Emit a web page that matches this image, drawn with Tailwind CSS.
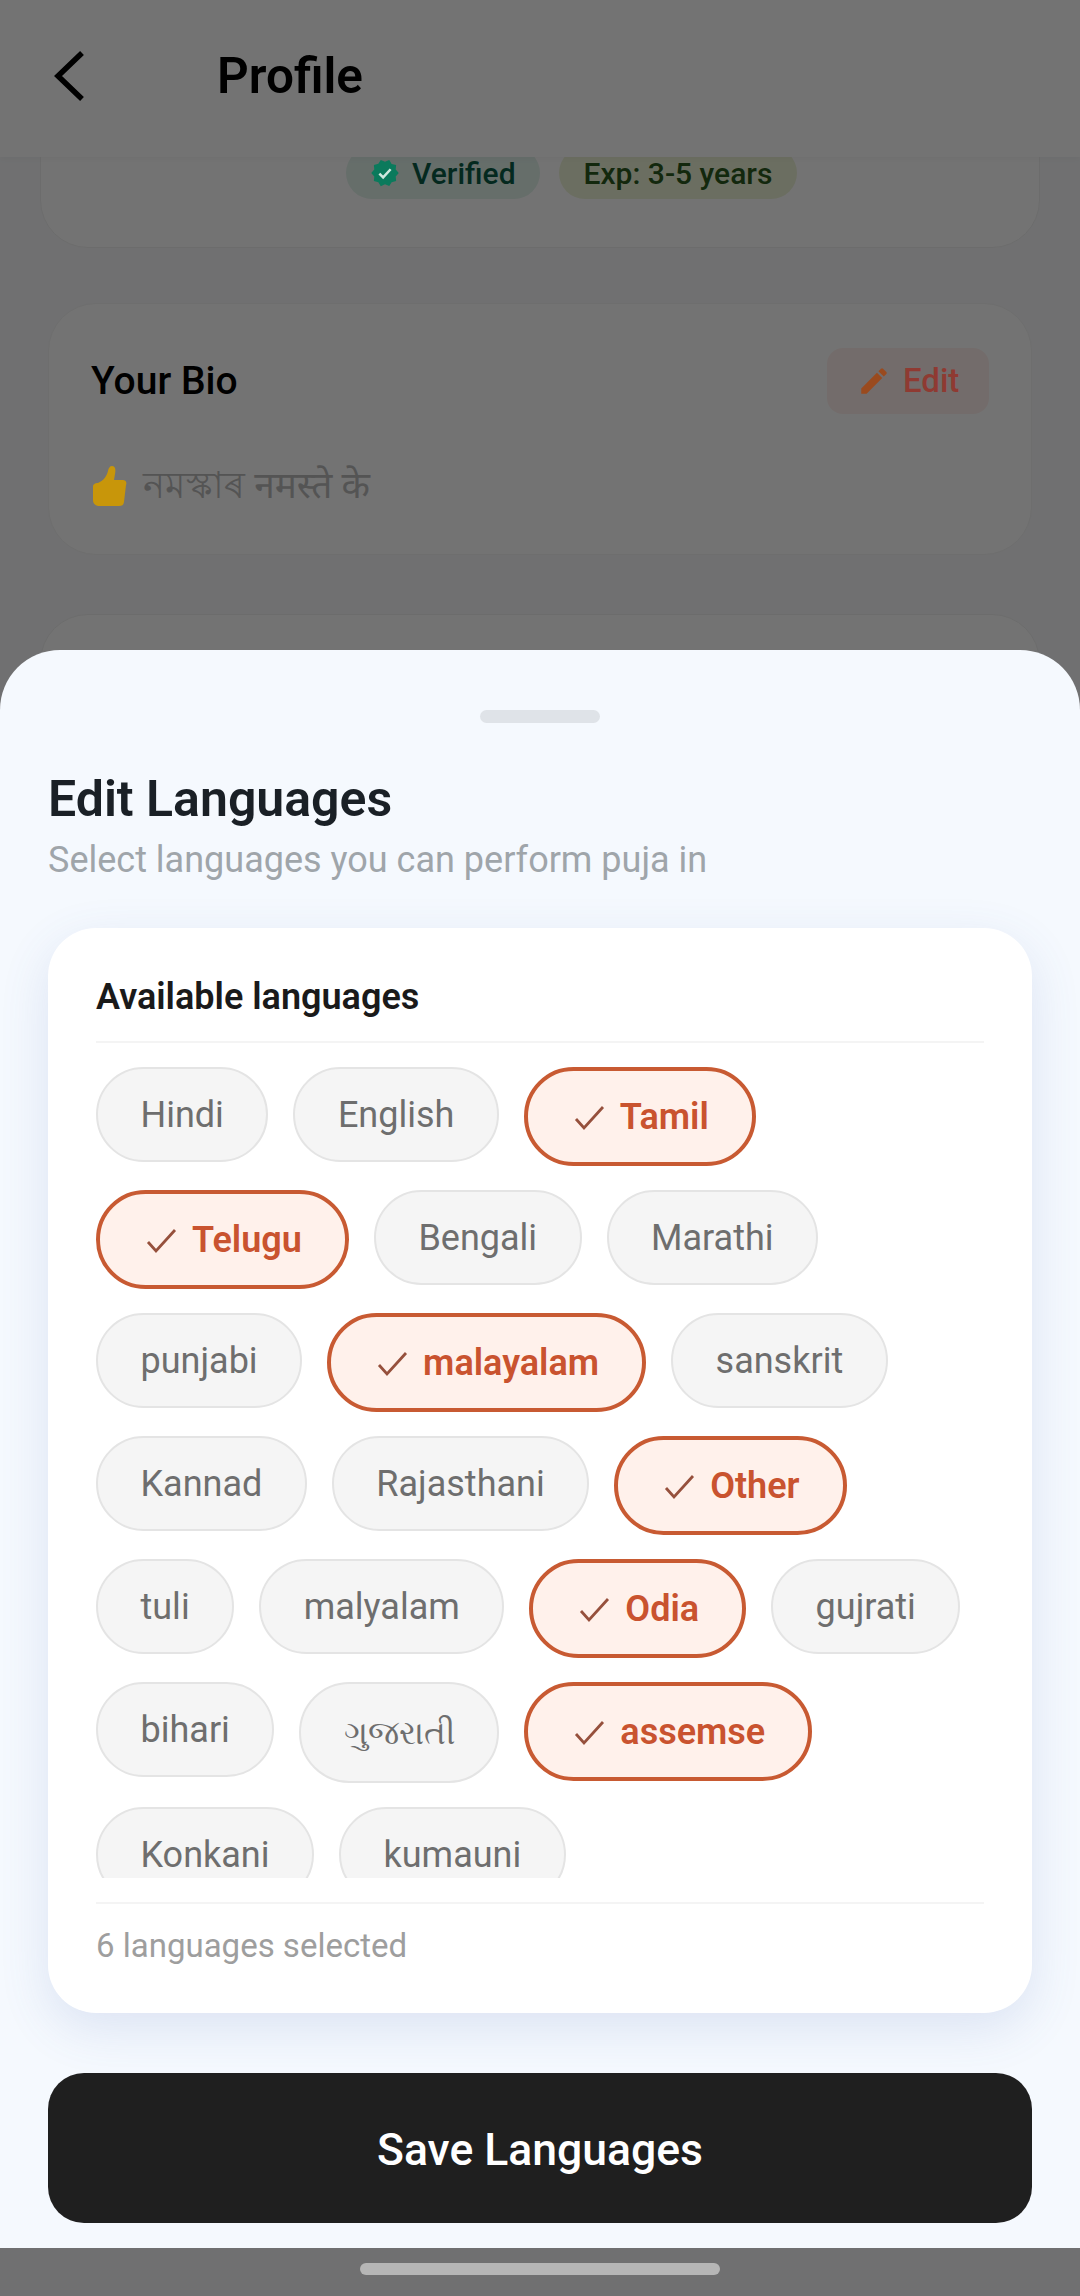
<!DOCTYPE html>
<html lang="en">
<head>
  <meta charset="UTF-8">
  <title>Profile</title>
  <script src="https://cdn.jsdelivr.net/npm/@tailwindcss/browser@4"></script>
</head>
<body class="m-0 bg-white font-['Roboto','Noto_Sans',sans-serif]">
<div class="relative w-[1080px] h-[2296px] overflow-hidden bg-[#f8f9fb]">

  <!-- page behind the sheet -->
  <header class="relative z-10 h-[157px] pb-[6px] bg-white flex items-center shadow-[0_2px_6px_rgba(0,0,0,0.04)]">
    <svg class="ml-[50px] w-[38px] h-[56px]" viewBox="0 0 38 56" fill="none" stroke="#000" stroke-width="5.5"><path d="M32 5 L8 28 L32 51"/></svg>
    <h1 class="ml-[129px] text-[49.5px] leading-[56px] font-semibold text-black">Profile</h1>
  </header>

  <main class="flex flex-col">
    <section class="-mt-[40px] mx-[40px] h-[131px] rounded-b-[48px] bg-white border border-[#f0f0f0] pt-[29px] pl-[305px] flex gap-[19px]">
      <div class="h-[52px] px-[24px] rounded-full bg-[#e2f3ec] flex items-center gap-[12px] text-[30px] text-[#0b5c46] font-medium">
        <svg class="relative z-30 w-[30px] h-[30px]" viewBox="0 0 24 24"><path fill="#0b7a5c" d="M23 12l-2.44-2.79.34-3.69-3.61-.82-1.89-3.2L12 2.96 8.6 1.5 6.71 4.69 3.1 5.5l.34 3.7L1 12l2.44 2.79-.34 3.7 3.61.82L8.6 22.5l3.4-1.47 3.4 1.46 1.89-3.19 3.61-.82-.34-3.69L23 12z"/><path fill="none" stroke="#cfe8df" stroke-width="2" d="M7.5 12.5l3 3 6-6.5"/></svg>
        Verified
      </div>
      <div class="h-[52px] px-[25px] rounded-full bg-[#eef4d8] flex items-center text-[30px] text-[#2c5a1e] font-medium">Exp: 3-5 years</div>
    </section>

    <section class="mt-[55px] mx-[48px] h-[252px] rounded-[48px] bg-white border border-[#f3f3f3] pl-[42px] pr-[42px] pt-[44px]">
      <div class="flex items-center justify-between">
        <h2 class="text-[39px] leading-[46px] font-medium text-black">Your Bio</h2>
        <div class="w-[162px] h-[66px] rounded-[16px] bg-[#fff0ed] pl-[30px] flex items-center gap-[12px] text-[33px] font-medium">
          <svg class="relative z-30 w-[34px] h-[34px]" viewBox="0 0 24 24"><path fill="#9a4a1e" d="M3 17.25V21h3.75L17.81 9.94l-3.75-3.75L3 17.25zM20.71 7.04a1 1 0 0 0 0-1.41l-2.34-2.34a1 1 0 0 0-1.41 0l-1.83 1.83 3.75 3.75 1.83-1.83z"/></svg>
          <span class="relative z-30 text-[#8f3a32]">Edit</span>
        </div>
      </div>
      <p class="mt-[50px] text-[37px] leading-[44px] text-[#bbbbbb] flex items-center gap-[14px]">
        <svg class="relative z-30 w-[38px] h-[42px]" viewBox="0 0 38 42"><path fill="#c8960a" d="M2 22c0-3 2-4 5-4 5-2 9-7 10-12 .4-3 2-5 4-5 3 0 4 3 3 8l-1 6h9c3 0 4 3 3 5l-2 17c-.5 3-2 4-5 4H9c-4 0-7-2-7-6z"/></svg>
        <span>নমস্কাৰ नमस्ते के</span>
      </p>
    </section>

    <section class="mt-[59px] mx-[40px] h-[200px] rounded-t-[48px] bg-white border border-[#f0f0f0]"></section>
  </main>

  <!-- dim layer -->
  <div class="absolute inset-0 z-20 bg-black/55"></div>

  <!-- home indicator -->
  <div class="absolute z-30 left-[360px] top-[2263px] w-[360px] h-[12px] rounded-full bg-[#b6b6b6]"></div>

  <!-- bottom sheet -->
  <div class="absolute z-30 left-0 right-0 top-[650px] h-[1598px] rounded-t-[60px] bg-[#f5f9fe] px-[48px] flex flex-col">
    <div class="mt-[60px] mx-auto w-[120px] h-[13px] rounded-full bg-[#dfe3e8]"></div>
    <h2 class="mt-[48px] text-[50px] leading-[56px] font-semibold text-[#1a2026]">Edit Languages</h2>
    <p class="mt-[12px] text-[36px] leading-[42px] text-[#9fa5aa]">Select languages you can perform puja in</p>

    <div class="mt-[47px] h-[1085px] rounded-[48px] bg-white px-[48px] flex flex-col shadow-[0_16px_50px_rgba(70,100,180,0.14)]">
      <h3 class="mt-[48px] pb-[23px] text-[36px] leading-[42px] font-semibold text-[#1a1a1a] border-b-2 border-[#f4f4f4]">Available languages</h3>

      <div class="mt-[24px] h-[811px] shrink-0 overflow-hidden flex flex-wrap content-start items-start gap-x-[25px] gap-y-[24px]">
        <span class="px-[42.5px] h-[95px] rounded-full border-2 border-[#e4e4e4] bg-[#f5f5f5] text-[36px] text-[#6e6e6e] flex items-center">Hindi</span>
        <span class="px-[42.5px] h-[95px] rounded-full border-2 border-[#e4e4e4] bg-[#f5f5f5] text-[36px] text-[#6e6e6e] flex items-center">English</span>
        <span class="px-[43px] h-[99px] rounded-full border-4 border-[#c85a32] bg-[#fff1eb] text-[36px] font-semibold text-[#c9532f] flex items-center gap-[13px]"><svg class="w-[36px] h-[36px]" viewBox="0 0 36 36" fill="none" stroke="#96503c" stroke-width="2.8"><path d="M5 20l8 9L32 8"/></svg>Tamil</span>
        <span class="px-[43px] h-[99px] rounded-full border-4 border-[#c85a32] bg-[#fff1eb] text-[36px] font-semibold text-[#c9532f] flex items-center gap-[13px]"><svg class="w-[36px] h-[36px]" viewBox="0 0 36 36" fill="none" stroke="#96503c" stroke-width="2.8"><path d="M5 20l8 9L32 8"/></svg>Telugu</span>
        <span class="px-[42.5px] h-[95px] rounded-full border-2 border-[#e4e4e4] bg-[#f5f5f5] text-[36px] text-[#6e6e6e] flex items-center">Bengali</span>
        <span class="px-[42.5px] h-[95px] rounded-full border-2 border-[#e4e4e4] bg-[#f5f5f5] text-[36px] text-[#6e6e6e] flex items-center">Marathi</span>
        <span class="px-[42.5px] h-[95px] rounded-full border-2 border-[#e4e4e4] bg-[#f5f5f5] text-[36px] text-[#6e6e6e] flex items-center">punjabi</span>
        <span class="px-[43px] h-[99px] rounded-full border-4 border-[#c85a32] bg-[#fff1eb] text-[36px] font-semibold text-[#c9532f] flex items-center gap-[13px]"><svg class="w-[36px] h-[36px]" viewBox="0 0 36 36" fill="none" stroke="#96503c" stroke-width="2.8"><path d="M5 20l8 9L32 8"/></svg>malayalam</span>
        <span class="px-[42.5px] h-[95px] rounded-full border-2 border-[#e4e4e4] bg-[#f5f5f5] text-[36px] text-[#6e6e6e] flex items-center">sanskrit</span>
        <span class="px-[42.5px] h-[95px] rounded-full border-2 border-[#e4e4e4] bg-[#f5f5f5] text-[36px] text-[#6e6e6e] flex items-center">Kannad</span>
        <span class="px-[42.5px] h-[95px] rounded-full border-2 border-[#e4e4e4] bg-[#f5f5f5] text-[36px] text-[#6e6e6e] flex items-center">Rajasthani</span>
        <span class="px-[43px] h-[99px] rounded-full border-4 border-[#c85a32] bg-[#fff1eb] text-[36px] font-semibold text-[#c9532f] flex items-center gap-[13px]"><svg class="w-[36px] h-[36px]" viewBox="0 0 36 36" fill="none" stroke="#96503c" stroke-width="2.8"><path d="M5 20l8 9L32 8"/></svg>Other</span>
        <span class="px-[42.5px] h-[95px] rounded-full border-2 border-[#e4e4e4] bg-[#f5f5f5] text-[36px] text-[#6e6e6e] flex items-center">tuli</span>
        <span class="px-[42.5px] h-[95px] rounded-full border-2 border-[#e4e4e4] bg-[#f5f5f5] text-[36px] text-[#6e6e6e] flex items-center">malyalam</span>
        <span class="px-[43px] h-[99px] rounded-full border-4 border-[#c85a32] bg-[#fff1eb] text-[36px] font-semibold text-[#c9532f] flex items-center gap-[13px]"><svg class="w-[36px] h-[36px]" viewBox="0 0 36 36" fill="none" stroke="#96503c" stroke-width="2.8"><path d="M5 20l8 9L32 8"/></svg>Odia</span>
        <span class="px-[42.5px] h-[95px] rounded-full border-2 border-[#e4e4e4] bg-[#f5f5f5] text-[36px] text-[#6e6e6e] flex items-center">gujrati</span>
        <span class="px-[42.5px] h-[95px] rounded-full border-2 border-[#e4e4e4] bg-[#f5f5f5] text-[36px] text-[#6e6e6e] flex items-center">bihari</span>
        <span class="px-[42.5px] h-[101px] rounded-full border-2 border-[#e4e4e4] bg-[#f5f5f5] text-[33px] text-[#6e6e6e] flex items-center">ગુજરાતી</span>
        <span class="px-[43px] h-[99px] rounded-full border-4 border-[#c85a32] bg-[#fff1eb] text-[36px] font-semibold text-[#c9532f] flex items-center gap-[13px]"><svg class="w-[36px] h-[36px]" viewBox="0 0 36 36" fill="none" stroke="#96503c" stroke-width="2.8"><path d="M5 20l8 9L32 8"/></svg>assemse</span>
        <span class="px-[42.5px] h-[95px] rounded-full border-2 border-[#e4e4e4] bg-[#f5f5f5] text-[36px] text-[#6e6e6e] flex items-center">Konkani</span>
        <span class="px-[42.5px] h-[95px] rounded-full border-2 border-[#e4e4e4] bg-[#f5f5f5] text-[36px] text-[#6e6e6e] flex items-center">kumauni</span>
      </div>

      <div class="mt-[24px] border-t-2 border-[#f4f4f4] pt-[22px] text-[33px] leading-[40px] text-[#9e9e9e]">6 languages selected</div>
    </div>

    <button class="mt-[60px] h-[150px] pt-[4px] rounded-[36px] bg-[#1f1f1f] text-white text-[44.5px] font-medium">Save Languages</button>
  </div>
</div>
</body>
</html>
